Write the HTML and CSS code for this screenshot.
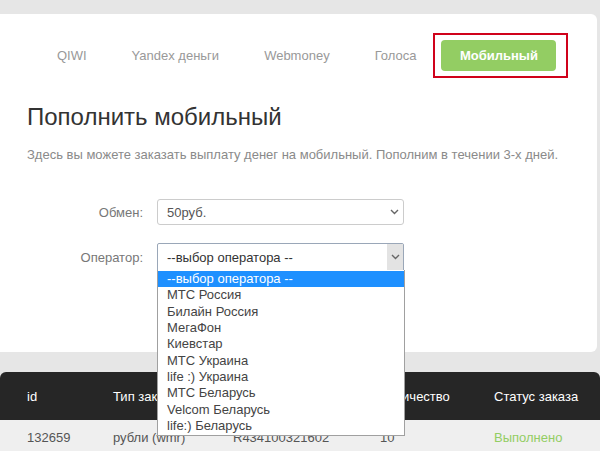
FILE: index.html
```html
<!DOCTYPE html>
<html lang="ru">
<head>
    <meta charset="utf-8">
    <title>Пополнить мобильный</title>
    <link rel="stylesheet" href="styles.css">
</head>
<body>
    <div class="card">
        <div class="tabs">
            <span class="tab">QIWI</span>
            <span class="tab">Yandex деньги</span>
            <span class="tab">Webmoney</span>
            <span class="tab">Голоса</span>
            <span class="tab-mark">
                <span class="tab active">Мобильный</span>
            </span>
        </div>

        <h1>Пополнить мобильный</h1>
        <p class="lead">Здесь вы можете заказать выплату денег на мобильный. Пополним в течении 3-х дней.</p>

        <div class="form">
            <div class="form-row">
                <span class="form-label">Обмен:</span>
                <div class="select">
                    <span>50руб.</span>
                    <span class="select-arrow">
                        <svg width="9" height="6" viewBox="0 0 9 6"><path d="M1 1l3.5 3.5L8 1" fill="none" stroke="#666" stroke-width="1.4"/></svg>
                    </span>
                </div>
            </div>
            <div class="form-row">
                <span class="form-label">Оператор:</span>
                <div class="select focused">
                    <span>--выбор оператора --</span>
                    <span class="select-arrow">
                        <svg width="9" height="6" viewBox="0 0 9 6"><path d="M1 1l3.5 3.5L8 1" fill="none" stroke="#666" stroke-width="1.4"/></svg>
                    </span>
                    <ul class="options">
                        <li class="selected">--выбор оператора --</li>
                        <li>МТС Россия</li>
                        <li>Билайн Россия</li>
                        <li>МегаФон</li>
                        <li>Киевстар</li>
                        <li>МТС Украина</li>
                        <li>life :) Украина</li>
                        <li>МТС Беларусь</li>
                        <li>Velcom Беларусь</li>
                        <li>life:) Беларусь</li>
                    </ul>
                </div>
            </div>
        </div>
    </div>

    <div class="orders">
        <div class="orders-head">
            <span>id</span>
            <span>Тип заказа</span>
            <span>Кошелек</span>
            <span>Количество</span>
            <span>Статус заказа</span>
        </div>
        <div class="orders-row">
            <span>132659</span>
            <span>рубли (wmr)</span>
            <span>R434100321602</span>
            <span>10</span>
            <span class="done">Выполнено</span>
        </div>
    </div>
</body>
</html>
```

FILE: styles.css
```css
body {
    margin: 0;
    background-color: #e6e6e6;
    font-family: "Liberation Sans", Arial, sans-serif;
    color: #333;
    overflow: hidden;
}

.card {
    width: 597px;
    height: 338px;
    margin-top: 14px;
    background-color: #fff;
    border-radius: 0 6px 6px 0;
    box-sizing: border-box;
    padding-top: 19px;
}

.tabs {
    display: flex;
    align-items: center;
    height: 45px;
    padding-left: 57px;
    gap: 45px;
}

.tab {
    font-size: 13px;
    color: #999;
}

.tab-mark {
    margin-left: -28px;
    border: 2px solid #d0021b;
    padding: 5px 10px 5px 6px;
    display: flex;
}

.tab.active {
    display: flex;
    align-items: center;
    justify-content: center;
    width: 115px;
    height: 31px;
    background-color: #93cd63;
    border-radius: 4px;
    color: #fff;
    font-weight: bold;
}

h1 {
    margin: 23px 0 0 27px;
    font-size: 24px;
    line-height: 32px;
    font-weight: normal;
    color: #333;
}

.lead {
    margin: 13px 0 0 27px;
    font-size: 13px;
    line-height: 18px;
    color: #8a8a8a;
}

.form {
    margin-top: 35px;
    display: flex;
    flex-direction: column;
    gap: 18px;
}

.form-row {
    display: flex;
    align-items: center;
}

.form-label {
    width: 143px;
    margin-right: 14px;
    text-align: right;
    font-size: 13px;
    color: #777;
}

.select {
    position: relative;
    display: flex;
    align-items: center;
    justify-content: space-between;
    width: 247px;
    height: 26px;
    box-sizing: border-box;
    padding-left: 9px;
    border: 1px solid #ccc;
    border-radius: 3px;
    font-size: 13px;
    color: #555;
}

.select.focused {
    height: 28px;
    border-color: #9aa7b8;
    border-radius: 2px 2px 0 0;
    color: #333;
}

.select-arrow {
    display: flex;
    align-items: center;
    justify-content: center;
    width: 16px;
    height: 100%;
    margin-right: 1px;
}

.focused .select-arrow {
    background-color: #e3e3e3;
    margin-right: 0;
}

.options {
    position: absolute;
    top: 100%;
    left: -1px;
    width: 248px;
    margin: 0;
    padding: 1px 0 1px;
    list-style: none;
    box-sizing: border-box;
    background-color: #fff;
    border: 1px solid #a0a0a0;
    border-top: none;
    z-index: 2;
}

.options li {
    height: 16.35px;
    line-height: 16px;
    padding-left: 9px;
    font-size: 13px;
    color: #444;
}

.options li.selected {
    background-color: #1e90ff;
    color: #fff;
}

.orders {
    margin-top: 20px;
    font-size: 13px;
}

.orders-head,
.orders-row {
    display: grid;
    grid-template-columns: 113px 120px 147px 114px 1fr;
    align-items: center;
}

.orders-head > span:first-child,
.orders-row > span:first-child {
    padding-left: 27px;
}

.orders-head {
    height: 48px;
    background-color: #262626;
    border-radius: 6px 6px 0 0;
    color: #fff;
}

.orders-row {
    height: 34px;
    background-color: #efefef;
    color: #555;
}

.done {
    color: #93cd63;
}
```
